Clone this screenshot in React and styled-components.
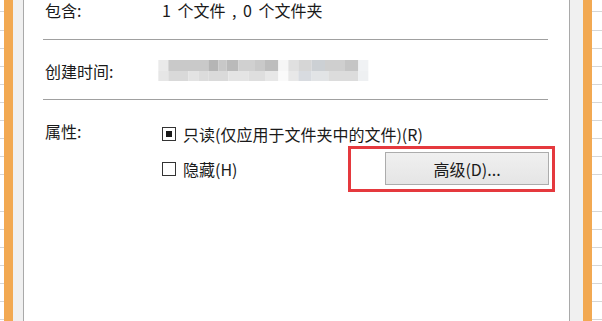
import styled, { createGlobalStyle } from 'styled-components';

const GlobalStyle = createGlobalStyle`
  html, body {
    margin: 0;
    padding: 0;
    background: #ffffff;
    overflow: hidden;
  }
  body {
    font-family: 'Noto Sans CJK SC', 'Noto Sans', sans-serif;
  }
`;

// pixel blocks of the blurred date, [from, to, colour] for each row
const mosaicTop = [
  [10, 40, '#eaeaea'], [40, 160, '#c9c9c9'], [160, 190, '#b5b5b5'],
  [190, 215, '#c8c8c8'], [215, 250, '#bababa'], [250, 300, '#d0d0d0'],
  [300, 330, '#c9c9c9'], [330, 370, '#bdbdbd'], [370, 400, '#f6f6f6'],
  [400, 430, '#e0e0e0'], [430, 470, '#d6d6d6'], [470, 510, '#ccd0d4'],
  [510, 570, '#cfcfcf'], [570, 610, '#c5c5c5'], [610, 640, '#f0f2f4'],
];
const mosaicBottom = [
  [10, 40, '#e6e6e6'], [40, 100, '#d9d9d9'], [100, 130, '#e3e3e3'],
  [130, 160, '#dcdcdc'], [160, 220, '#dadada'], [220, 280, '#e4e4e4'],
  [280, 330, '#dedede'], [330, 370, '#e7e7e7'], [370, 400, '#fafafa'],
  [400, 430, '#e8e8e8'], [430, 470, '#d8dbe0'], [470, 520, '#e2e4e6'],
  [520, 610, '#dcdcdc'], [610, 640, '#eef0f2'],
];

function Mosaic() {
  return (
    <MosaicSvg width="212" height="21" viewBox="0 0 212 21">
      <defs>
        <filter id="soft">
          <feGaussianBlur stdDeviation="0.6" />
        </filter>
      </defs>
      <g filter="url(#soft)">
        {mosaicTop.map(([a, b, c]) => (
          <rect key={'t' + a} x={a / 3 - 3} y="0" width={(b - a) / 3} height="11" fill={c} />
        ))}
        {mosaicBottom.map(([a, b, c]) => (
          <rect key={'b' + a} x={a / 3 - 3} y="11" width={(b - a) / 3} height="10" fill={c} />
        ))}
      </g>
    </MosaicSvg>
  );
}

export default function App() {
  return (
    <>
      <GlobalStyle />
      <Screen>
        <Sheet width={4} />
        <Frame />
        <Margin width={10} />
        <Page>
          <Row>
            <Label>包含:</Label>
            <Value spaced>1 个文件 , 0 个文件夹</Value>
          </Row>
          <Separator />
          <Row>
            <Label>创建时间:</Label>
            <Value>
              <Mosaic />
            </Value>
          </Row>
          <Separator />
          <AttrRow>
            <Label>属性:</Label>
            <Options>
              <Option>
                <Check checked />
                只读(仅应用于文件夹中的文件)(R)
              </Option>
              <ButtonRow>
                <Option>
                  <Check />
                  隐藏(H)
                </Option>
                <Highlight>
                  <Button>高级(D)...</Button>
                </Highlight>
              </ButtonRow>
            </Options>
          </AttrRow>
        </Page>
        <Margin width={13} />
        <Frame />
        <Sheet width={10} />
      </Screen>
    </>
  );
}

const Screen = styled.div`
  display: flex;
  width: 602px;
  height: 321px;
  overflow: hidden;
`;

const Sheet = styled.div`
  flex: 0 0 ${(p) => p.width}px;
  background-color: #ffffff;
  background-image: repeating-linear-gradient(
    to bottom,
    transparent 0,
    transparent 11.5px,
    #d6d6d6 11.5px,
    #d6d6d6 12.5px,
    transparent 12.5px,
    transparent 18.1px
  );
`;

const Frame = styled.div`
  flex: 0 0 9px;
  background: #f2a952;
`;

const Margin = styled.div`
  flex: 0 0 ${(p) => p.width}px;
  background: #f0f0f0;
`;

const Page = styled.div`
  flex: 1;
  display: flex;
  flex-direction: column;
  background: #ffffff;
  border-left: 1px solid #a9a9a9;
  border-right: 1px solid #a9a9a9;
  padding: 0 21px 0 19px;
  color: #1a1a1a;
  font-size: 16px;
  line-height: 20px;
`;

const Row = styled.div`
  display: grid;
  grid-template-columns: 119px 1fr;
  align-items: center;
  height: 20px;
  margin-bottom: 19px;
`;

const Separator = styled.div`
  height: 1px;
  background: #a0a0a0;
  margin-bottom: 20px;
`;

const Label = styled.div`
  padding-left: 2px;
  white-space: nowrap;
`;

const Value = styled.div`
  display: flex;
  align-items: center;
  white-space: pre;
  word-spacing: ${(p) => (p.spaced ? '3px' : '0')};
`;

const MosaicSvg = styled.svg`
  display: block;
  margin-left: -4px;
`;

const AttrRow = styled.div`
  display: grid;
  grid-template-columns: 119px 1fr;
  align-items: start;
  margin-top: 1px;
`;

const Options = styled.div`
  display: flex;
  flex-direction: column;
  padding-top: 3px;
  gap: 8px;
`;

const Option = styled.label`
  display: flex;
  align-items: center;
  gap: 7px;
  height: 20px;
  white-space: nowrap;
`;

const Check = styled.span`
  position: relative;
  flex: 0 0 auto;
  box-sizing: border-box;
  width: 14px;
  height: 14px;
  border: 1px solid #333333;
  background: #ffffff;

  &::after {
    content: '';
    display: ${(p) => (p.checked ? 'block' : 'none')};
    position: absolute;
    left: 3px;
    top: 3px;
    width: 6px;
    height: 6px;
    background: #1a1a1a;
  }
`;

const ButtonRow = styled.div`
  display: flex;
  align-items: center;
  justify-content: space-between;
`;

const Highlight = styled.div`
  position: relative;

  &::before {
    content: '';
    position: absolute;
    left: -37px;
    top: -6px;
    right: -7px;
    bottom: -7px;
    border: 3px solid #e5393e;
    pointer-events: none;
  }
`;

const Button = styled.button`
  display: block;
  box-sizing: border-box;
  width: 164px;
  height: 33px;
  margin-right: -1px;
  border: 1px solid #acacac;
  background: linear-gradient(to bottom, #f0f0f0, #e5e5e5);
  color: #1a1a1a;
  font-family: 'Noto Sans CJK SC', 'Noto Sans', sans-serif;
  font-size: 16px;
  padding: 0;
`;
